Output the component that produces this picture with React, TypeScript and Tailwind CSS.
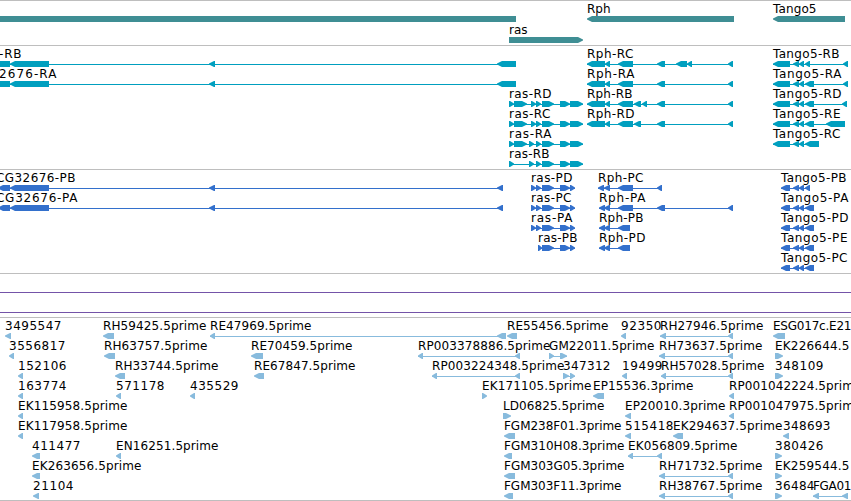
type Exon = [number, number];

interface Feature {
    name: string;
    x: number;
    end: number;
    exons: Exon[];
    forward?: boolean;
}

const f = (name: string, x: number, end: number, exons: Exon[], forward = false): Feature => ({ name, x, end, exons, forward });

// Exon structures shared by several transcripts
const rphStart: Exon[] = [[587, 605], [605, 610], [618, 633]];
const rphTail: Exon[] = [[657, 665], [728, 733]];
const rasTail: Exon[] = [[536, 541], [542, 554], [560, 570], [570, 583]];
const rasCds: Exon[] = [[542, 554], [560, 570], [570, 575]];
const tangoStart: Exon[] = [[773, 790], [793, 799], [799, 804]];
const tangoCds: Exon[] = [[781, 790], [793, 799], [799, 804], [805, 814]];
const cgExons: Exon[] = [[-8, 10], [10, 49], [209, 215], [497, 516]];
const cgCds: Exon[] = [[-2, 10], [10, 49], [209, 215], [497, 503]];
const rasFull: Exon[] = [[509, 514], [514, 527], [531, 536], ...rasTail];
const rasPep: Exon[] = [[531, 536], [536, 541], ...rasCds];

const genes: Feature[][] = [
    [
        f('', 0, 0, [[-8, 516]]),
        f('Rph', 587, 610, [[587, 734]]),
        f('Tango5', 773, 816, [[773, 845]]),
    ],
    [f('ras', 509, 527, [[509, 583]], true)],
];

const transcripts: Feature[][] = [
    [
        f('-RB', -1, 21, cgExons),
        f('Rph-RC', 587, 633, [...rphStart, [657, 665], [676, 687], [687, 692], [728, 733]]),
        f('Tango5-RB', 773, 839, [...tangoStart, [805, 810], [843, 848]]),
    ],
    [
        f('2676-RA', -1, 56, cgExons),
        f('Rph-RA', 587, 634, [...rphStart, ...rphTail]),
        f('Tango5-RA', 773, 841, [...tangoStart, [805, 814], [843, 848]]),
    ],
    [
        f('ras-RD', 509, 551, rasFull, true),
        f('Rph-RB', 587, 632, [...rphStart, [634, 641], [642, 647], ...rphTail]),
        f('Tango5-RD', 773, 841, [...tangoStart, [805, 814], [842, 847]]),
    ],
    [
        f('ras-RC', 509, 550, rasFull, true),
        f('Rph-RD', 587, 634, [...rphStart, [634, 641], ...rphTail]),
        f('Tango5-RE', 773, 840, [...tangoStart, [805, 814], [826, 845]]),
    ],
    [
        f('ras-RA', 509, 551, [[509, 514], [514, 527], [529, 534], ...rasTail], true),
        f('Tango5-RC', 773, 840, [...tangoStart, [805, 819]]),
    ],
    [f('ras-RB', 509, 549, [[509, 514], [529, 534], ...rasTail], true)],
];

const proteins: Feature[][] = [
    [
        f('CG32676-PB', -4, 75, cgCds),
        f('ras-PD', 531, 572, rasPep, true),
        f('Rph-PC', 598, 643, [[598, 604], [604, 610], [618, 633], [657, 662]]),
        f('Tango5-PB', 781, 846, [[781, 790], [793, 799], [799, 804], [805, 810]]),
    ],
    [
        f('CG32676-PA', -4, 77, cgCds),
        f('ras-PC', 531, 571, rasPep, true),
        f('Rph-PA', 599, 645, [[599, 605], [604, 610], [618, 633], ...rphTail]),
        f('Tango5-PA', 781, 848, tangoCds),
    ],
    [
        f('ras-PA', 531, 572, rasPep, true),
        f('Rph-PB', 599, 643, [[599, 605], [604, 610], [618, 630]]),
        f('Tango5-PD', 781, 848, tangoCds),
    ],
    [
        f('ras-PB', 538, 577, [[538, 542], ...rasCds], true),
        f('Rph-PD', 599, 645, [[599, 605], [604, 610], [618, 630]]),
        f('Tango5-PE', 781, 847, tangoCds),
    ],
    [f('Tango5-PC', 781, 847, tangoCds)],
];

const ests: Feature[][] = [
    [
        f('3495547', 5, 61, [[5, 11]]),
        f('RH59425.5prime', 103, 206, [[103, 114]]),
        f('RE47969.5prime', 210, 311, [[210, 215], [497, 506]]),
        f('RE55456.5prime', 507, 608, [[507, 517]]),
        f('92350', 621, 661, [[621, 626]]),
        f('RH27946.5prime', 660, 763, [[660, 666], [728, 733]]),
        f('ESG017c.E21', 773, 851, [[773, 785]]),
    ],
    [
        f('3556817', 9, 65, [[9, 14]]),
        f('RH63757.5prime', 104, 207, [[104, 115]]),
        f('RE70459.5prime', 251, 352, [[251, 263]]),
        f('RP003378886.5prime', 418, 550, [[418, 423], [515, 520]]),
        f('GM22011.5prime', 549, 654, [[549, 554], [560, 567]], true),
        f('RH73637.5prime', 659, 762, [[659, 665], [728, 733]]),
        f('EK226644.5', 775, 849, [[775, 783]], true),
    ],
    [
        f('152106', 18, 66, [[18, 23]]),
        f('RH33744.5prime', 115, 218, [[115, 125]]),
        f('RE67847.5prime', 254, 355, [[254, 264]]),
        f('RP003224348.5prime', 432, 564, [[432, 437], [515, 520]]),
        f('347312', 563, 610, [[563, 569], [570, 575]], true),
        f('19499', 622, 662, [[622, 627]]),
        f('RH57028.5prime', 661, 764, [[661, 666], [728, 733]]),
        f('348109', 775, 823, [[775, 783]], true),
    ],
    [
        f('163774', 18, 66, [[18, 23]]),
        f('571178', 116, 164, [[116, 121]]),
        f('435529', 190, 238, [[190, 195]]),
        f('EK171105.5prime', 482, 591, [[482, 487]], true),
        f('EP15536.3prime', 593, 693, [[593, 604]]),
        f('RP001042224.5prime', 729, 861, [[729, 734]]),
    ],
    [
        f('EK115958.5prime', 18, 127, [[18, 23]]),
        f('LD06825.5prime', 503, 604, [[503, 511]], true),
        f('EP20010.3prime', 625, 725, [[625, 631]]),
        f('RP001047975.5prime', 729, 861, [[729, 734]]),
    ],
    [
        f('EK117958.5prime', 18, 127, [[18, 23]]),
        f('FGM238F01.3prime', 504, 621, [[504, 515]]),
        f('515418', 625, 673, [[625, 631]]),
        f('EK294637.5prime', 673, 782, [[673, 683]]),
        f('348693', 783, 830, [[783, 789]]),
    ],
    [
        f('411477', 32, 80, [[32, 40]]),
        f('EN16251.5prime', 116, 218, [[116, 121]]),
        f('FGM310H08.3prime', 504, 624, [[504, 512]]),
        f('EK056809.5prime', 628, 737, [[628, 633], [657, 662]]),
        f('380426', 775, 823, [[775, 782]], true),
    ],
    [
        f('EK263656.5prime', 32, 141, [[32, 40]]),
        f('FGM303G05.3prime', 504, 624, [[504, 515]]),
        f('RH71732.5prime', 659, 762, [[659, 665], [728, 733]]),
        f('EK259544.5', 775, 849, [[775, 782]], true),
    ],
    [
        f('21104', 33, 73, [[33, 39]]),
        f('FGM303F11.3prime', 504, 621, [[504, 513]]),
        f('RH38767.5prime', 659, 762, [[659, 665], [728, 733]]),
        f('36484', 775, 814, [[775, 782]], true),
        f('FGA01', 813, 851, [[813, 819], [842, 848]]),
    ],
];

// Block whose leading end is narrowed to a blunt tip in the direction of the strand
function exonPoints([a, b]: Exon, forward?: boolean) {
    const tip = Math.min(5, b - a - 1);
    return forward
        ? `${a},13 ${b - tip},13 ${b},15.4 ${b},16.6 ${b - tip},19 ${a},19`
        : `${b},13 ${a + tip},13 ${a},15.4 ${a},16.6 ${a + tip},19 ${b},19`;
}

function FeatureGlyph({ feature }: { feature: Feature }) {
    const { name, x, end, exons, forward } = feature;
    const first = exons[0][0];
    const last = exons[exons.length - 1][1];
    return (
        <g>
            {exons.length > 1 && <rect x={first} y={16} width={last - first} height={1} shapeRendering="crispEdges" />}
            {exons.map((exon) => (
                <polygon key={exon[0]} points={exonPoints(exon, forward)} />
            ))}
            {name && (
                <text x={x} y={10} textLength={end - x + 0.5} className="fill-black text-[12px]">
                    {name}
                </text>
            )}
        </g>
    );
}

function Track({ rows, color, rowHeight = 'h-5' }: { rows: Feature[][]; color: string; rowHeight?: string }) {
    return (
        <section className={`border-t border-[#bebebe] pt-0.5 ${color}`}>
            {rows.map((row, i) => (
                <div key={i} className={rowHeight}>
                    <svg width={851} height={20} className="block overflow-visible fill-current">
                        {row.map((feature, j) => (
                            <FeatureGlyph key={j} feature={feature} />
                        ))}
                    </svg>
                </div>
            ))}
        </section>
    );
}

export default function App() {
    return (
        <main className="flex h-[501px] w-[851px] flex-col overflow-hidden bg-white font-['DejaVu_Sans',sans-serif]">
            <Track rows={genes} color="text-[#3f8e94]" rowHeight="h-[21px]" />
            <Track rows={transcripts} color="text-[#009fbf]" />
            <div className="h-px" />
            <Track rows={proteins} color="text-[#3370cc]" />
            <div className="h-px" />
            <section className="h-11 border-t border-[#bebebe] pt-[18px]">
                <div className="h-[21px] border-y border-[#7454a8]" />
            </section>
            <Track rows={ests} color="text-[#88bbdd]" />
            <div className="h-px bg-[#bebebe]" />
        </main>
    );
}
